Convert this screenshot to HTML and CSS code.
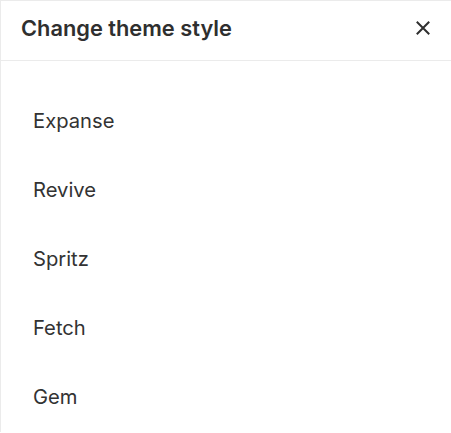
FILE: index.html
```html
<!DOCTYPE html>
<html>
<head>
<meta charset="utf-8">
<link rel="stylesheet" href="styles.css">
</head>
<body>
<div class="panel">
  <div class="header">
    <h1 class="title">Change theme style</h1>
    <button class="close" aria-label="Close">
      <svg width="14" height="14" viewBox="0 0 14 14"><path d="M1.5 1.5 L12.5 12.5 M12.5 1.5 L1.5 12.5" stroke="#2f2f2f" stroke-width="2" stroke-linecap="square" fill="none"/></svg>
    </button>
  </div>
  <ul class="list">
    <li class="item">Expanse</li>
    <li class="item">Revive</li>
    <li class="item">Spritz</li>
    <li class="item">Fetch</li>
    <li class="item">Gem</li>
  </ul>
</div>
</body>
</html>
```
FILE: styles.css
```css
html, body {
  margin: 0;
  padding: 0;
  background: #ffffff;
}
body {
  font-family: Inter, "Liberation Sans", sans-serif;
  color: #333333;
}
.panel {
  border-top: 1px solid #ebebeb;
  border-left: 1px solid #ebebeb;
  height: 432px;
  box-sizing: border-box;
}
.header {
  display: flex;
  align-items: center;
  justify-content: space-between;
  padding: 15px 21px 20px 20px;
  border-bottom: 1px solid #ebebeb;
}
.title {
  margin: 0;
  font-size: 21.8px;
  line-height: 24px;
  font-weight: 600;
  color: #2f2f2f;
}
.close {
  border: 0;
  background: transparent;
  padding: 0;
  width: 14px;
  height: 14px;
  display: flex;
  cursor: pointer;
}
.list {
  list-style: none;
  margin: 0;
  padding: 26px 0 0 32px;
}
.item {
  font-size: 20.2px;
  line-height: 24px;
  padding: 22px 0 23px;
  color: #333333;
}
```
